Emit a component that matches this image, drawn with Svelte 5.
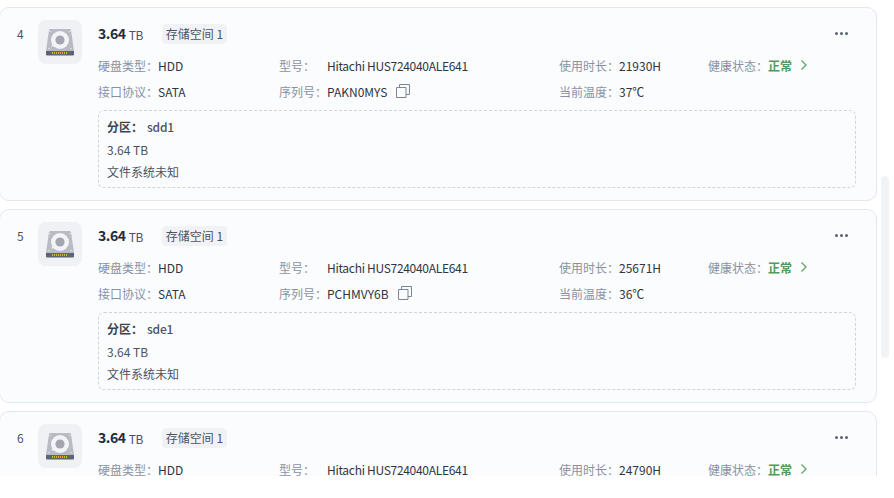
<script lang="ts">
  const disks = [
    { no: 4, serial: "PAKN0MYS", hours: "21930H", temp: "37℃", part: "sdd1" },
    { no: 5, serial: "PCHMVY6B", hours: "25671H", temp: "36℃", part: "sde1" },
    { no: 6, serial: "", hours: "24790H", temp: "", part: "" },
  ];
</script>

<div class="page">
  <div class="list">
    {#each disks as d}
      <section class="card">
        <div class="no">{d.no}</div>
        <div class="thumb">
          <svg viewBox="0 0 28 28" width="28" height="28">
            <path d="M4 1h20l1 1 3 21H0L3 2z" fill="#b9bbc4" />
            <path d="M0 23h28v3.5a1 1 0 0 1-1 1H1a1 1 0 0 1-1-1z" fill="#5d6472" />
            <circle cx="14" cy="12" r="9" fill="#f3f4f6" />
            <circle cx="14" cy="12" r="4.6" fill="#a3a6b1" />
            <path d="M5 18.5l2.5-3.5 2.5 3z" fill="#f3f4f6" />
            <path d="M6 25h16" stroke="#d9b23a" stroke-width="2" stroke-dasharray="1 1" />
            <circle cx="4" cy="3.5" r=".8" fill="#e6e7eb" />
            <circle cx="24" cy="3.5" r=".8" fill="#e6e7eb" />
            <circle cx="3" cy="20.5" r=".8" fill="#e6e7eb" />
            <circle cx="25" cy="20.5" r=".8" fill="#e6e7eb" />
          </svg>
        </div>
        <div class="body">
          <div class="title">
            <span class="size">3.64</span>
            <span class="unit">TB</span>
            <span class="tag">存储空间 1</span>
          </div>
          <div class="specs">
            <div class="spec"><span class="label w60">硬盘类型：</span>HDD</div>
            <div class="spec"><span class="label w48">型号：</span><span class="model">Hitachi HUS724040ALE641</span></div>
            <div class="spec"><span class="label w60">使用时长：</span>{d.hours}</div>
            <div class="spec">
              <span class="label w60">健康状态：</span><b class="ok">正常</b>
              <svg class="chev" viewBox="0 0 8 12" width="8" height="12">
                <path d="M1.5 1.5L6 6l-4.5 4.5" fill="none" stroke="#5fa46a" stroke-width="1.3" />
              </svg>
            </div>
            {#if d.part}
              <div class="spec"><span class="label w60">接口协议：</span>SATA</div>
              <div class="spec">
                <span class="label w48">序列号：</span>{d.serial}
                <svg class="copy" viewBox="0 0 14 14" width="14" height="14">
                  <path d="M.5 3.5h9.5v10H.5z" fill="none" stroke="#7d8594" />
                  <path d="M3.5 3.5V.5h10v10H10" fill="none" stroke="#7d8594" />
                </svg>
              </div>
              <div class="spec"><span class="label w60">当前温度：</span>{d.temp}</div>
            {/if}
          </div>
          {#if d.part}
            <div class="partition">
              <div class="pname"><b>分区：</b><span>{d.part}</span></div>
              <div class="pline">3.64 TB</div>
              <div class="pline">文件系统未知</div>
            </div>
          {/if}
        </div>
        <div class="more"><i></i><i></i><i></i></div>
      </section>
    {/each}
  </div>
  <div class="scrollbar"></div>
</div>

<style>
  :global(body) {
    background: #fff;
  }

  .page {
    position: relative;
    width: 894px;
    height: 498px;
    overflow: hidden;
    font-family: "Noto Sans CJK SC", "Noto Sans", sans-serif;
    font-size: 12px;
    color: #2f3542;
  }

  .list {
    height: 476px;
    overflow: hidden;
    padding-top: 7px;
    box-sizing: border-box;
  }

  .card {
    position: relative;
    display: flex;
    box-sizing: border-box;
    width: 878px;
    height: 194px;
    margin: 0 0 8px -1px;
    padding: 12px 20px 0 17px;
    background: #fbfcfe;
    border: 1px solid #e3e7ee;
    border-radius: 10px;
  }

  .no {
    width: 21px;
    line-height: 28px;
    color: #4b5262;
  }

  .thumb {
    display: flex;
    align-items: center;
    justify-content: center;
    flex: none;
    width: 44px;
    height: 44px;
    border-radius: 8px;
    background: #f0f1f5;
  }

  .body {
    flex: 1;
    margin-left: 16px;
  }

  .title {
    display: flex;
    align-items: center;
    height: 28px;
  }

  .size {
    font-size: 14px;
    font-weight: 700;
    letter-spacing: -0.4px;
    color: #262b36;
    position: relative;
    top: -1px;
  }

  .unit {
    margin-left: 3px;
    letter-spacing: -0.5px;
    color: #4b5262;
  }

  .tag {
    margin-left: 19px;
    padding: 0 4px;
    height: 20px;
    line-height: 20px;
    border-radius: 4px;
    background: #f1f2f5;
    color: #4b5262;
  }

  .specs {
    display: grid;
    grid-template-columns: 181px 280px 149px 1fr;
    grid-auto-rows: 26px;
    margin-top: 4px;
  }

  .spec {
    display: flex;
    align-items: center;
    white-space: nowrap;
  }

  .label {
    flex: none;
    color: #8a92a2;
  }

  .w60 {
    width: 60px;
  }

  .w48 {
    width: 48px;
  }

  .model {
    letter-spacing: -0.3px;
  }

  .ok {
    color: #4f9a5c;
    font-weight: 700;
  }

  .chev {
    margin-left: 8px;
  }

  .copy {
    margin-left: 9px;
  }

  .partition {
    height: 78px;
    box-sizing: border-box;
    margin-top: 6px;
    padding: 6px 8px;
    border: 1px dashed #ced3dc;
    border-radius: 6px;
  }

  .pname,
  .pline {
    height: 22px;
    line-height: 22px;
    color: #4b5262;
  }

  .pname {
    margin-top: -1px;
    margin-bottom: 1px;
  }

  .pname b {
    color: #3d4351;
  }

  .pname span {
    margin-left: 4px;
    font-weight: 500;
    letter-spacing: -0.2px;
  }

  .more {
    position: absolute;
    top: 24px;
    right: 28px;
    display: flex;
    gap: 2px;
  }

  .more i {
    width: 3px;
    height: 3px;
    background: #5a6170;
    border-radius: 50%;
  }

  .scrollbar {
    position: absolute;
    top: 176px;
    left: 881px;
    width: 8px;
    height: 182px;
    border-radius: 4px;
    background: #f2f3f7;
  }
</style>
